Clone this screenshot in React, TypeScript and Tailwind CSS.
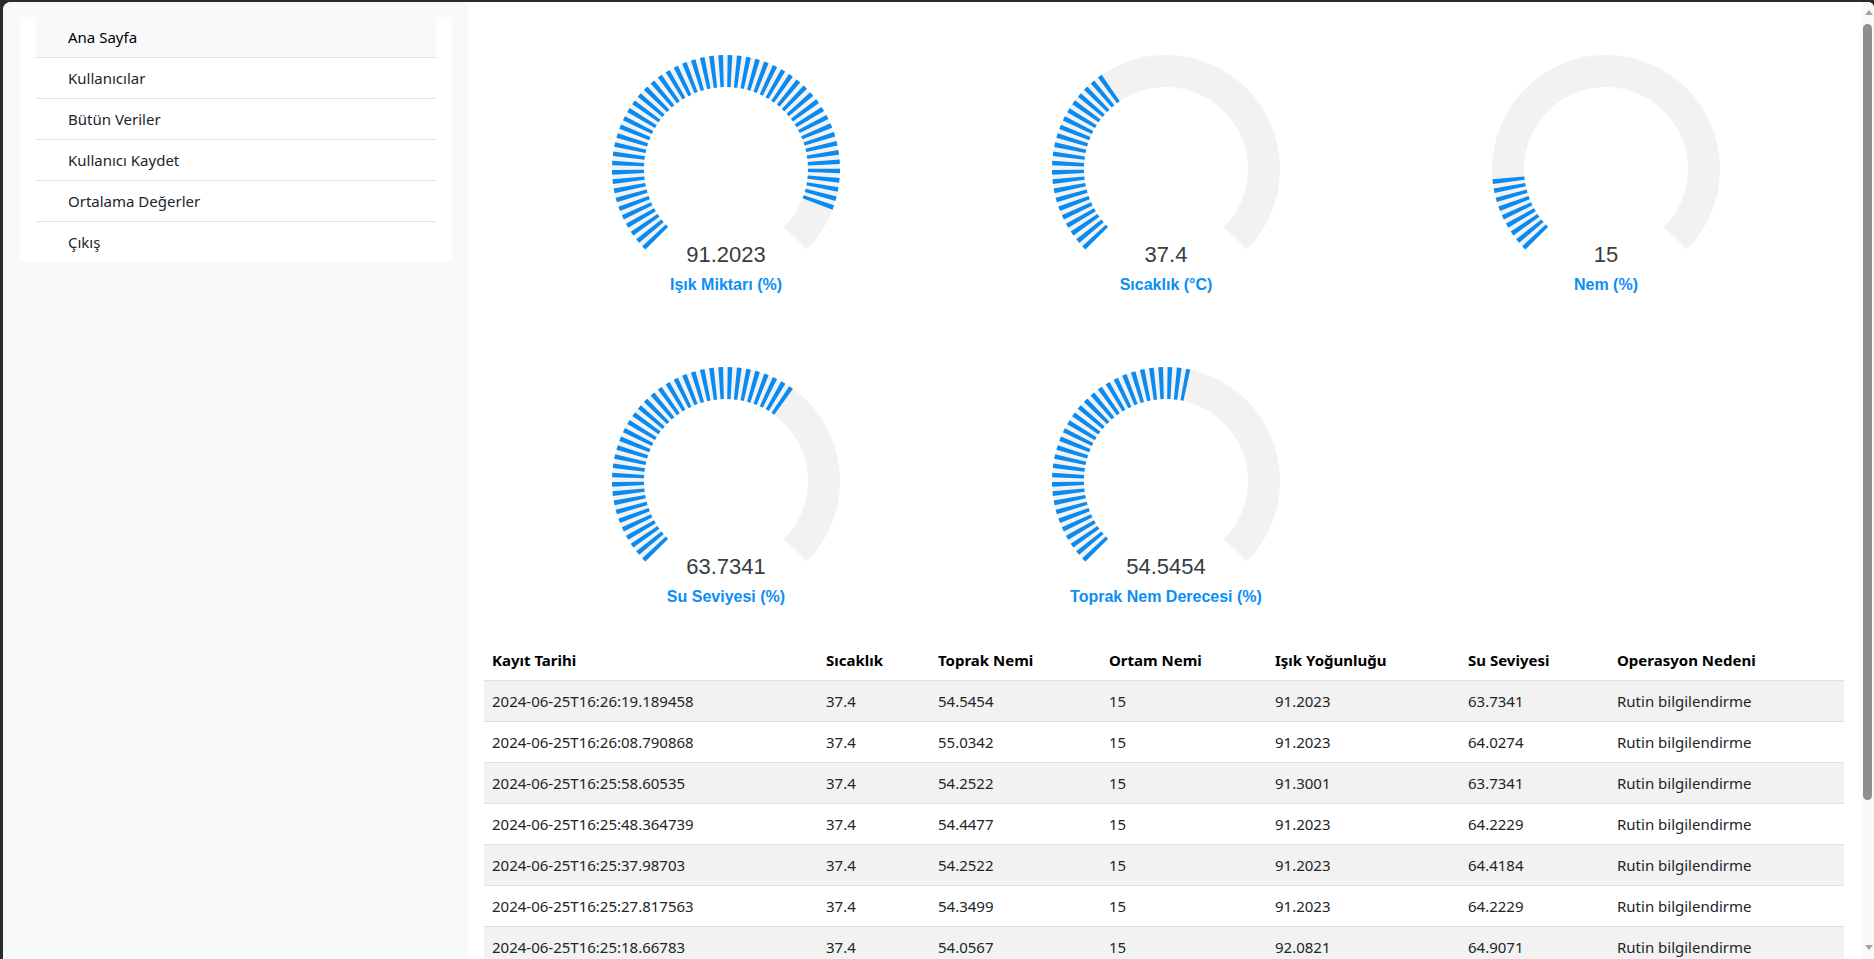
import type { ReactNode } from "react";

const menu = [
  "Ana Sayfa",
  "Kullanıcılar",
  "Bütün Veriler",
  "Kullanıcı Kaydet",
  "Ortalama Değerler",
  "Çıkış",
];

const gauges = [
  { value: 91.2023, label: "Işık Miktarı (%)" },
  { value: 37.4, label: "Sıcaklık (°C)" },
  { value: 15, label: "Nem (%)" },
  { value: 63.7341, label: "Su Seviyesi (%)" },
  { value: 54.5454, label: "Toprak Nem Derecesi (%)" },
];

const columns = [
  "Kayıt Tarihi",
  "Sıcaklık",
  "Toprak Nemi",
  "Ortam Nemi",
  "Işık Yoğunluğu",
  "Su Seviyesi",
  "Operasyon Nedeni",
];

const rows = [
  ["2024-06-25T16:26:19.189458", "37.4", "54.5454", "15", "91.2023", "63.7341"],
  ["2024-06-25T16:26:08.790868", "37.4", "55.0342", "15", "91.2023", "64.0274"],
  ["2024-06-25T16:25:58.60535", "37.4", "54.2522", "15", "91.3001", "63.7341"],
  ["2024-06-25T16:25:48.364739", "37.4", "54.4477", "15", "91.2023", "64.2229"],
  ["2024-06-25T16:25:37.98703", "37.4", "54.2522", "15", "91.2023", "64.4184"],
  ["2024-06-25T16:25:27.817563", "37.4", "54.3499", "15", "91.2023", "64.2229"],
  ["2024-06-25T16:25:18.66783", "37.4", "54.0567", "15", "92.0821", "64.9071"],
];

// radial gauge, 270° sweep starting bottom-left, dashed fill like the apex "stroked gauge"
function Gauge({ value, label }: { value: number; label: string }) {
  const cx = 220;
  const cy = 151;
  const r = 98;
  const pt = (deg: number) => {
    const a = (deg * Math.PI) / 180;
    return [cx + r * Math.sin(a), cy - r * Math.cos(a)];
  };
  const arc = (a0: number, a1: number) => {
    const [x0, y0] = pt(a0);
    const [x1, y1] = pt(a1);
    const large = a1 - a0 > 180 ? 1 : 0;
    return `M ${x0} ${y0} A ${r} ${r} 0 ${large} 1 ${x1} ${y1}`;
  };
  const end = -135 + (270 * value) / 100;

  return (
    <svg width="440" height="312" viewBox="0 0 440 312">
      <path d={arc(-135, 135)} fill="none" stroke="#f2f2f2" strokeWidth="32" />
      <path
        d={arc(-135, end)}
        fill="none"
        stroke="#0b8bef"
        strokeWidth="32"
        strokeDasharray="4 4"
      />
      <text
        x={cx}
        y={244}
        textAnchor="middle"
        fontFamily="'Liberation Sans', Arial, sans-serif"
        fontSize="22"
        fill="#373d3f"
      >
        {value}
      </text>
      <text
        x={cx}
        y={272}
        textAnchor="middle"
        fontFamily="'Liberation Sans', Arial, sans-serif"
        fontSize="16"
        fontWeight="700"
        fill="#0b8ef5"
      >
        {label}
      </text>
    </svg>
  );
}

function Cell({ children, bold }: { children: ReactNode; bold?: boolean }) {
  return (
    <div className={`flex items-center px-2 ${bold ? "font-bold text-black" : "text-[#212529]"}`}>
      {children}
    </div>
  );
}

const grid =
  "grid h-[41px] grid-cols-[334px_112px_171px_166px_193px_149px_235px] border-b border-[#dee2e6]";

export default function App() {
  return (
    <div className="h-[959px] w-[1874px] overflow-hidden bg-[#2b2b2b] pl-[3px] pt-[2px] font-['Noto_Sans',sans-serif] text-[15px]">
      <div className="flex h-[957px] overflow-hidden rounded-tl-[8px] rounded-tr-[6px] bg-white">
        <aside className="w-[465px] shrink-0 bg-[#f8f9fa] pl-[17px] pt-[15px]">
          <div className="w-[432px] bg-white px-4">
            {menu.map((m, i) => (
              <div
                key={m}
                className={`flex items-center pl-8 text-[#212529] ${
                  i === menu.length - 1 ? "h-[40px]" : "h-[41px] border-b border-[#dee2e6]"
                } ${i === 0 ? "bg-[#f8f9fa] text-black" : ""}`}
              >
                {m}
              </div>
            ))}
          </div>
        </aside>

        <main className="w-[1394px] shrink-0 px-4 pt-4">
          <div className="grid grid-cols-[repeat(3,440px)] pl-[22px]">
            {gauges.map((g) => (
              <div key={g.label} className="h-[312px]">
                <Gauge value={g.value} label={g.label} />
              </div>
            ))}
          </div>

          <div className="-mt-0.5 w-[1360px]">
            <div className={grid}>
              {columns.map((c) => (
                <Cell key={c} bold>
                  {c}
                </Cell>
              ))}
            </div>
            {rows.map((r, i) => (
              <div key={r[0]} className={`${grid} ${i % 2 === 0 ? "bg-[#f2f2f2]" : "bg-white"}`}>
                {r.map((v, j) => (
                  <Cell key={j}>{v}</Cell>
                ))}
                <Cell>Rutin bilgilendirme</Cell>
              </div>
            ))}
          </div>
        </main>

        <div className="relative w-[12px] shrink-0 bg-[#fafafa]">
          <div className="absolute left-[3px] top-[8px] h-0 w-0 border-x-[4px] border-b-[5px] border-x-transparent border-b-[#a3a3a3]" />
          <div className="absolute left-[1px] top-[22px] h-[776px] w-[9px] rounded-full bg-[#8f8f8f]" />
          <div className="absolute bottom-[9px] left-[3px] h-0 w-0 border-x-[4px] border-t-[5px] border-x-transparent border-t-[#a3a3a3]" />
        </div>
      </div>
    </div>
  );
}
